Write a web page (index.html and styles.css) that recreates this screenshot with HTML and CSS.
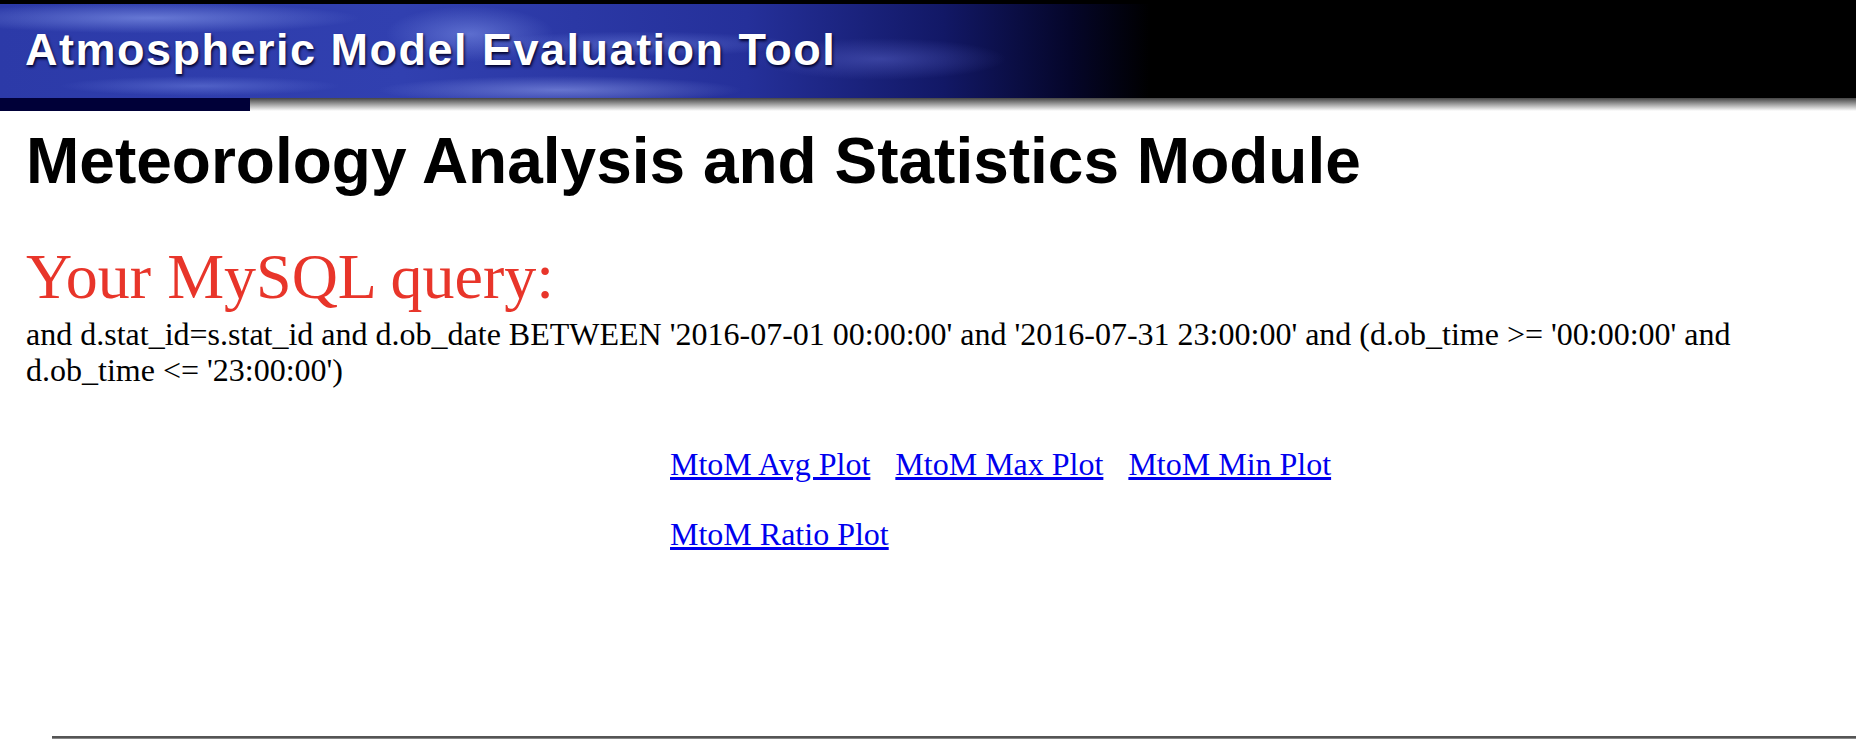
FILE: index.html
```html
<!DOCTYPE html>
<html lang="en">
<head>
    <meta charset="UTF-8">
    <title>AMET - Meteorology Analysis and Statistics Module</title>
    <link rel="stylesheet" href="styles.css">
</head>
<body>
    <div class="banner">
        <div class="banner-art">
            <span class="banner-title">Atmospheric Model Evaluation Tool</span>
        </div>
        <div class="banner-edge"><span class="edge-left"></span></div>
    </div>

    <div class="content">
        <h1>Meteorology Analysis and Statistics Module</h1>

        <h2 class="query-head">Your MySQL query:</h2>
        <p class="query">and d.stat_id=s.stat_id and d.ob_date BETWEEN '2016-07-01 00:00:00' and '2016-07-31 23:00:00' and (d.ob_time &gt;= '00:00:00' and d.ob_time &lt;= '23:00:00')</p>

        <div class="plots">
            <div class="plot-row">
                <a href="#">MtoM Avg Plot</a>
                <a href="#">MtoM Max Plot</a>
                <a href="#">MtoM Min Plot</a>
            </div>
            <div class="plot-row">
                <a href="#">MtoM Ratio Plot</a>
            </div>
        </div>
    </div>

    <hr class="rule">
</body>
</html>
```

FILE: styles.css
```css
body { margin: 0; font-family: "Liberation Serif", "Times New Roman", serif; background: #fff; color: #000; }

.banner { background: #000; }
.banner-art { height: 98px; width: 1150px; border-top: 4px solid #000; box-sizing: border-box; display: flex; align-items: center;
    background:
        radial-gradient(ellipse 300px 22px at 150px 14px, rgba(140,160,240,0.6), transparent 70%),
        radial-gradient(ellipse 120px 40px at 470px 30px, rgba(130,150,235,0.55), transparent 70%),
        radial-gradient(ellipse 220px 18px at 640px 40px, rgba(120,140,230,0.45), transparent 70%),
        radial-gradient(ellipse 260px 20px at 560px 86px, rgba(150,165,240,0.55), transparent 70%),
        radial-gradient(ellipse 200px 14px at 200px 82px, rgba(120,140,230,0.45), transparent 70%),
        radial-gradient(ellipse 180px 30px at 880px 55px, rgba(90,100,200,0.5), transparent 70%),
        linear-gradient(to right, #2c3aa8 0%, #3140b0 35%, #25309a 65%, #121866 82%, #05062a 93%, #000 100%); }
.banner-title { margin-left: 25px; margin-bottom: 2px; font-family: "Liberation Sans", Arial, sans-serif; font-weight: bold; font-size: 45px; letter-spacing: 1.5px; color: #fff; text-shadow: 1px 2px 3px #00002a; }
.banner-edge { height: 13px; background: linear-gradient(to bottom, #444, #fff); }
.edge-left { display: block; width: 250px; height: 13px; background: #000038; }

.content { padding: 0 26px; }
h1 { font-family: "Liberation Sans", Arial, sans-serif; font-size: 64px; margin: 13px 0 0; }
.query-head { color: #e8352a; font-weight: normal; font-size: 64px; margin: 44px 0 0; line-height: 1.1; }
.query { font-size: 32px; line-height: 36px; margin: 4px 0 0; }
.plots { margin: 58px 0 0 644px; font-size: 32px; line-height: 36px; display: flex; flex-direction: column; gap: 34px; }
.plot-row { display: flex; gap: 25px; }
.plots a { color: #0000ee; }

.rule { margin: 184px 0 0 52px; border: 0; border-top: 2px solid #555; border-bottom: 1px solid #888; }
```
